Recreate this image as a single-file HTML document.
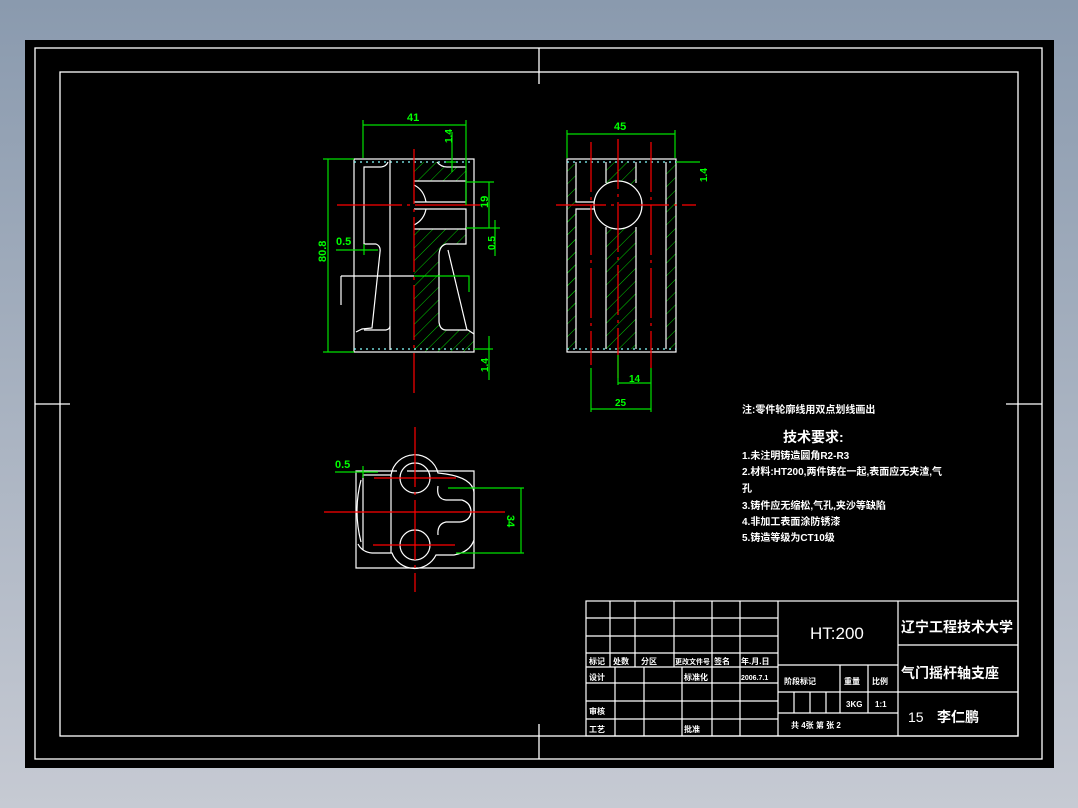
<!DOCTYPE html>
<html><head><meta charset="utf-8"><style>
html,body{margin:0;padding:0;width:1078px;height:808px;overflow:hidden;background:linear-gradient(#8a9aae,#c6cad3);}
svg{position:absolute;left:0;top:0}
text{font-family:"Liberation Sans","Noto Sans CJK SC",sans-serif;}
.w{fill:#fff;font-weight:bold}
.g{fill:#00ff00;font-weight:bold}
</style></head><body>
<svg width="1078" height="808" viewBox="0 0 1078 808">
<defs>
<pattern id="h" width="9" height="9" patternUnits="userSpaceOnUse" patternTransform="rotate(45)">
<line x1="0" y1="0" x2="0" y2="9" stroke="#00cc00" stroke-width="1"/>
</pattern>
</defs>
<rect x="25" y="40" width="1029" height="728" fill="#000"/>
<g fill="none" stroke="#fff" stroke-width="1.3">
<rect x="35" y="48" width="1007" height="711"/>
<rect x="60" y="72" width="958" height="664"/>
<line x1="539" y1="48" x2="539" y2="84"/><line x1="539" y1="724" x2="539" y2="759"/>
<line x1="35" y1="404" x2="70" y2="404"/><line x1="1006" y1="404" x2="1042" y2="404"/>
</g>

<!-- FRONT VIEW -->
<g>
<path d="M414 162 L437 162 Q441 167 447 167 L466 167 L466 181 L414 181 Z" fill="url(#h)"/>
<path d="M414 229 L466 229 L466 244 L446 244 Q439 246 439 256 L439 322 Q440 330 446 330 L466 330 L474 334 L474 352 L414 352 Z" fill="url(#h)"/>
<g fill="none" stroke="#fff" stroke-width="1.2">
<rect x="354" y="159" width="120" height="193"/>
<line x1="354" y1="162" x2="474" y2="162" stroke="#8ff" stroke-dasharray="2 4"/>
<line x1="354" y1="349" x2="474" y2="349" stroke="#8ff" stroke-dasharray="2 4"/>
<path d="M390 160 L390 350"/>
<path d="M388 162 Q386 167 380 167 L364 167 L364 244 L376 244 Q381 246 380 252 L372 328 L362 329 L356 332"/>
<path d="M364 330 L386 330 Q390 329 390 326"/>
<path d="M414 181 L466 181 L466 202 L414 202 M414 209 L466 209 L466 229 L414 229"/>
<path d="M414 185 Q424 190 426 202 M414 225 Q424 220 426 209"/>
<path d="M437 162 Q441 167 447 167 L466 167 L466 181"/>
<path d="M466 229 L466 244 L446 244 Q439 246 439 256 L439 322 Q440 330 446 330 L468 330 L474 334"/>
<path d="M448 250 L467 330"/>
<path d="M341 276 L414 276"/><path d="M341 276 L341 305"/>
</g>
<g stroke="#f00" stroke-width="1.2" fill="none">
<line x1="414" y1="149" x2="414" y2="393" stroke-dasharray="55 5 3 5"/>
<line x1="337" y1="205" x2="492" y2="205" stroke-dasharray="65 5 3 5"/>
</g>
<g stroke="#00e000" stroke-width="1.2" fill="none">
<path d="M363 120 L363 158 M466 120 L466 205 M363 125 L466 125"/>
<path d="M323 159 L354 159 M323 352 L354 352 M328 159 L328 352"/>
<path d="M452 132 L452 172 M446 162 L456 162"/>
<path d="M466 182 L494 182 M466 228 L500 228 M489 182 L489 228"/>
<path d="M495 220 L495 256"/>
<path d="M336 250 L378 250 M364 244 L364 255"/>
<path d="M414 276 L469 276 L469 292"/>
<path d="M474 349 L493 349 M489 336 L489 380"/>
</g>
<text class="g" x="407" y="121" font-size="11">41</text>
<text class="g" x="322" y="266" font-size="11" transform="rotate(-90 322 262)">80.8</text>
<text class="g" x="336" y="245" font-size="11">0.5</text>
<text class="g" x="447" y="148" font-size="10" transform="rotate(-90 447 143)">1.4</text>
<text class="g" x="484" y="212" font-size="11" transform="rotate(-90 484 208)">19</text>
<text class="g" x="489" y="256" font-size="10" transform="rotate(-90 489 250)">0.5</text>
<text class="g" x="482" y="378" font-size="10" transform="rotate(-90 482 372)">1.4</text>
</g>

<!-- SIDE VIEW -->
<g>
<rect x="567" y="164" width="9" height="143" fill="url(#h)"/>
<rect x="567" y="209" width="9" height="140" fill="url(#h)"/>
<rect x="606" y="162" width="30" height="187" fill="url(#h)"/>
<rect x="666" y="162" width="10" height="187" fill="url(#h)"/>
<circle cx="618" cy="205" r="24" fill="#000"/>
<g fill="none" stroke="#fff" stroke-width="1.2">
<rect x="567" y="159" width="109" height="193"/>
<line x1="567" y1="162" x2="676" y2="162" stroke="#8ff" stroke-dasharray="2 4"/>
<line x1="567" y1="349" x2="676" y2="349" stroke="#8ff" stroke-dasharray="2 4"/>
<path d="M576 162 L576 202 L594 202 M576 209 L594 209 L576 209 L576 349"/>
<path d="M606 162 L606 183 M606 227 L606 349 M636 162 L636 183 M636 227 L636 349 M666 162 L666 349"/>
<circle cx="618" cy="205" r="24"/>
</g>
<g stroke="#f00" stroke-width="1.2" fill="none" stroke-dasharray="50 5 3 5">
<line x1="591" y1="142" x2="591" y2="365"/>
<line x1="618" y1="139" x2="618" y2="380"/>
<line x1="651" y1="142" x2="651" y2="368"/>
<line x1="556" y1="205" x2="696" y2="205"/>
</g>
<g stroke="#00e000" stroke-width="1.2" fill="none">
<path d="M567 130 L567 158 M675 130 L675 158 M567 134 L675 134"/>
<path d="M676 162 L700 162"/>
<path d="M618 355 L618 385 M651 368 L651 412 M618 383 L651 383"/>
<path d="M591 368 L591 412 M591 409 L651 409"/>
</g>
<text class="g" x="614" y="130" font-size="11">45</text>
<text class="g" x="701" y="188" font-size="10" transform="rotate(-90 701 182)">1.4</text>
<text class="g" x="629" y="382" font-size="10">14</text>
<text class="g" x="615" y="406" font-size="10">25</text>
</g>

<!-- TOP VIEW -->
<g>
<g fill="none" stroke="#fff" stroke-width="1.2">
<path d="M397 471 L356 471 L356 568 L474 568 L474 471 L407 471"/>
<path d="M363 475 L391 475 A24 24 0 0 1 438 473 L446 474 Q472 478 474 492 L474 540 Q470 552 454 555 L436 555 A24 24 0 0 1 392 553 L372 553 Q362 552 358 544"/>
<path d="M363 475 L363 550"/>
<path d="M361 480 Q353 511 361 542"/>
<path d="M438 486 Q436 499 446 500 L462 500 Q471 503 471 512 Q470 521 460 522 L446 522 Q437 524 438 535"/>
<path d="M391 475 L391 553"/>
<circle cx="415" cy="478" r="15"/>
<circle cx="415" cy="545" r="15"/>
</g>
<g stroke="#f00" stroke-width="1.2" fill="none">
<line x1="415" y1="427" x2="415" y2="592" stroke-dasharray="60 5 3 5"/>
<line x1="324" y1="512" x2="505" y2="512"/>
<line x1="374" y1="478" x2="456" y2="478"/>
<line x1="373" y1="545" x2="455" y2="545"/>
</g>
<g stroke="#00e000" stroke-width="1.2" fill="none">
<path d="M335 472 L378 472 M363 466 L363 478"/>
<path d="M448 488 L524 488 M456 553 L524 553 M521 488 L521 553"/>
</g>
<text class="g" x="335" y="468" font-size="11">0.5</text>
<text class="g" x="513" y="521" font-size="11" transform="rotate(90 513 515)">34</text>
</g>

<!-- NOTES -->
<g class="w">
<text x="742" y="413" font-size="10">注:零件轮廓线用双点划线画出</text>
<text x="783" y="442" font-size="14">技术要求:</text>
<text x="742" y="459" font-size="10">1.未注明铸造圆角R2-R3</text>
<text x="742" y="475" font-size="10">2.材料:HT200,两件铸在一起,表面应无夹渣,气</text>
<text x="742" y="492" font-size="10">孔</text>
<text x="742" y="509" font-size="10">3.铸件应无缩松,气孔,夹沙等缺陷</text>
<text x="742" y="525" font-size="10">4.非加工表面涂防锈漆</text>
<text x="742" y="541" font-size="10">5.铸造等级为CT10级</text>
</g>

<!-- TITLE BLOCK -->
<g fill="none" stroke="#fff" stroke-width="1.2">
<rect x="586" y="601" width="432" height="135"/>
<path d="M586 618 L778 618 M586 636 L778 636 M586 653 L778 653 M586 667 L778 667 M586 683 L778 683 M586 701 L778 701 M586 719 L778 719"/>
<path d="M610 601 L610 667 M635 601 L635 667 M674 601 L674 667 M712 601 L712 667 M740 601 L740 736"/>
<path d="M615 667 L615 736 M644 667 L644 736 M682 667 L682 736 M712 667 L712 736"/>
<path d="M778 601 L778 736 M898 601 L898 736"/>
<path d="M778 665 L898 665 M778 692 L898 692 M778 713 L898 713"/>
<path d="M840 665 L840 713 M868 665 L868 713 M794 692 L794 713 M810 692 L810 713 M826 692 L826 713"/>
<path d="M898 645 L1018 645 M898 692 L1018 692"/>
</g>
<g class="w" font-size="8">
<text x="589" y="664">标记</text><text x="613" y="664">处数</text><text x="641" y="664">分区</text>
<text x="675" y="664" font-size="7">更改文件号</text><text x="714" y="664">签名</text><text x="741" y="664">年.月.日</text>
<text x="589" y="680">设计</text><text x="684" y="680">标准化</text><text x="741" y="680" font-size="7">2006.7.1</text>
<text x="589" y="714">审核</text><text x="589" y="732">工艺</text><text x="684" y="732">批准</text>
<text x="784" y="684">阶段标记</text><text x="844" y="684">重量</text><text x="872" y="684">比例</text>
<text x="846" y="707">3KG</text><text x="875" y="707">1:1</text>
<text x="791" y="728">共  4张  第  张  2</text>
</g>
<text x="810" y="639" font-size="17" fill="#fff">HT:200</text>
<g class="w" font-size="14">
<text x="901" y="632">辽宁工程技术大学</text>
<text x="901" y="678">气门摇杆轴支座</text>
<text x="908" y="722" font-weight="normal">15</text>
<text x="937" y="722">李仁鹏</text>
</g>
</svg>
</body></html>
